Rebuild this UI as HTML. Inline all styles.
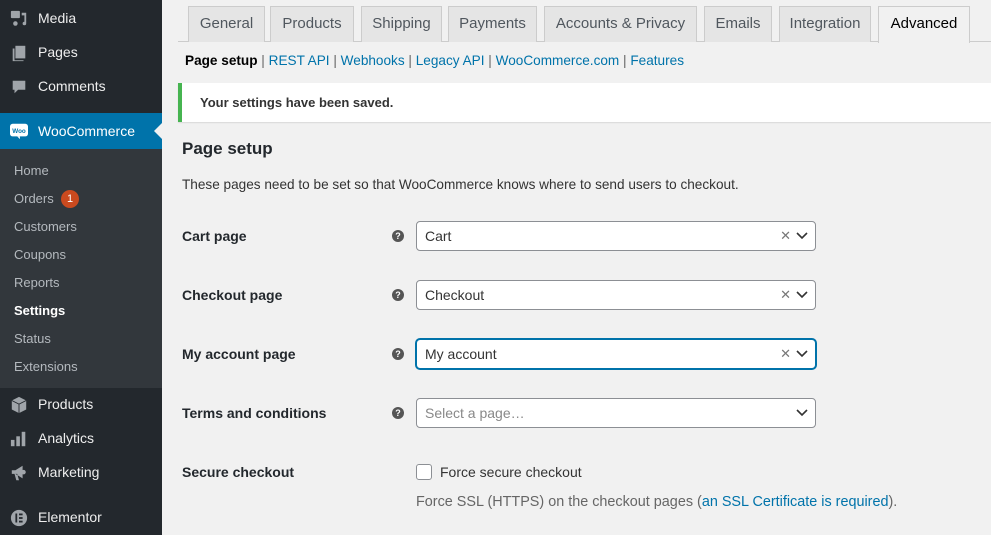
<!DOCTYPE html>
<html><head><meta charset="utf-8"><style>
*{box-sizing:border-box;margin:0;padding:0}
body{width:991px;height:535px;overflow:hidden;background:#f1f1f1;font-family:"Liberation Sans",sans-serif;font-size:14px;color:#23282d;position:relative}
#sb{position:absolute;left:0;top:0;width:162px;height:535px;background:#23282d}
.mi{position:absolute;left:0;width:162px;color:#eee;font-size:14px}
.mi .ic{position:absolute;left:10px;width:18px;height:18px}
.mi span.t{position:absolute;left:38px}
#woo{top:113px;height:36px;background:#0073aa;color:#fff}
#sub{position:absolute;top:149px;left:0;width:162px;height:239px;background:#32373c}
.si{position:absolute;left:14px;font-size:13px;color:#b4b9be}
.tab{position:absolute;top:6px;height:36px;background:#e5e5e5;border:1px solid #ccc;border-bottom:none;font-size:15px;color:#50575e;text-align:center;line-height:34px}
.sub a{color:#0073aa;text-decoration:none}
.lbl{position:absolute;left:182px;font-size:14px;font-weight:bold;color:#23282d}
.q{position:absolute;left:392px;width:12px;height:12px;border-radius:50%;background:#555;color:#fff;font-size:9px;font-weight:bold;text-align:center;line-height:12px}
.sel{position:absolute;left:416px;width:400px;height:30px;background:#fff;border:1px solid #8c8f94;border-radius:4px;font-size:14px;line-height:28px;padding-left:8px;color:#333}
.sel .x{position:absolute;right:24px;top:0;color:#777;font-size:13px}
.sel svg{position:absolute;right:7px;top:10px}
</style></head><body>
<div id="sb">
 <div class="mi" style="top:10px"><svg class="ic" viewBox="0 0 20 20" style="top:0"><rect x="1" y="1" width="10" height="8" rx="1" fill="#a0a5aa"/><path d="M13 3h5v12a2 2 0 1 1-2-2V6h-3z" fill="#a0a5aa"/><circle cx="6" cy="15" r="2.5" fill="#a0a5aa"/></svg><span class="t">Media</span></div>
 <div class="mi" style="top:44px"><svg class="ic" viewBox="0 0 20 20" style="top:0"><path d="M6 2h11v14H6z" fill="#a0a5aa"/><path d="M3 5h2v13h10v1H3z" fill="#a0a5aa"/></svg><span class="t">Pages</span></div>
 <div class="mi" style="top:78px"><svg class="ic" viewBox="0 0 20 20" style="top:0"><path d="M3 3h14v10H9l-4 4v-4H3z" fill="#a0a5aa"/></svg><span class="t">Comments</span></div>
 <div class="mi" id="woo"><svg class="ic" viewBox="0 0 20 20" style="top:9px"><rect x="0" y="2" width="20" height="14" rx="3" fill="#fff"/><path d="M8 16l3 3v-3z" fill="#fff"/><text x="10" y="12" font-size="7" font-weight="bold" fill="#0073aa" text-anchor="middle" font-family="Liberation Sans">Woo</text></svg><span class="t" style="top:10px">WooCommerce</span>
 <div style="position:absolute;right:0;top:10px;width:0;height:0;border-top:8px solid transparent;border-bottom:8px solid transparent;border-right:8px solid #f1f1f1"></div></div>
 <div id="sub"></div>
 <div class="si" style="top:163px">Home</div>
 <div class="si" style="top:191px">Orders</div>
 <div style="position:absolute;left:61px;top:190px;width:18px;height:18px;border-radius:50%;background:#ca4a1f;color:#fff;font-size:11px;text-align:center;line-height:18px">1</div>
 <div class="si" style="top:219px">Customers</div>
 <div class="si" style="top:247px">Coupons</div>
 <div class="si" style="top:275px">Reports</div>
 <div class="si" style="top:303px;color:#fff;font-weight:bold">Settings</div>
 <div class="si" style="top:331px">Status</div>
 <div class="si" style="top:359px">Extensions</div>
 <div class="mi" style="top:396px"><svg class="ic" viewBox="0 0 20 20" style="top:0"><path d="M10 1l8 4v10l-8 4-8-4V5z" fill="#a0a5aa"/><path d="M2 5l8 4 8-4M10 9v10" stroke="#23282d" fill="none"/></svg><span class="t">Products</span></div>
 <div class="mi" style="top:430px"><svg class="ic" viewBox="0 0 20 20" style="top:0"><rect x="1" y="11" width="4" height="7" fill="#a0a5aa"/><rect x="7" y="7" width="4" height="11" fill="#a0a5aa"/><rect x="13" y="2" width="4" height="16" fill="#a0a5aa"/></svg><span class="t">Analytics</span></div>
 <div class="mi" style="top:464px"><svg class="ic" viewBox="0 0 20 20" style="top:0"><path d="M2 7h4l8-5v14l-8-5H2z M5 11l2 7h3l-2-7z" fill="#a0a5aa"/><circle cx="15" cy="9" r="2.5" fill="#a0a5aa"/></svg><span class="t">Marketing</span></div>
 <div class="mi" style="top:509px"><svg class="ic" viewBox="0 0 20 20" style="top:0"><circle cx="10" cy="10" r="9" fill="#a0a5aa"/><rect x="6" y="5" width="2" height="10" fill="#23282d"/><rect x="10" y="5" width="4" height="2" fill="#23282d"/><rect x="10" y="9" width="4" height="2" fill="#23282d"/><rect x="10" y="13" width="4" height="2" fill="#23282d"/></svg><span class="t">Elementor</span></div>
</div>

<div style="position:absolute;left:178px;top:41px;width:813px;border-top:1px solid #ccc"></div>
<div class="tab" style="left:188px;width:77px">General</div>
<div class="tab" style="left:270px;width:84px">Products</div>
<div class="tab" style="left:361px;width:81px">Shipping</div>
<div class="tab" style="left:448px;width:89px">Payments</div>
<div class="tab" style="left:544px;width:153px">Accounts &amp; Privacy</div>
<div class="tab" style="left:704px;width:68px">Emails</div>
<div class="tab" style="left:779px;width:92px">Integration</div>
<div class="tab" style="left:878px;width:92px;background:#f1f1f1;color:#000;height:37px">Advanced</div>

<div class="sub" style="position:absolute;left:185px;top:53px;font-size:13.6px;color:#666">
<b style="color:#000">Page setup</b> | <a>REST API</a> | <a>Webhooks</a> | <a>Legacy API</a> | <a>WooCommerce.com</a> | <a>Features</a></div>

<div style="position:absolute;left:178px;top:83px;width:813px;height:39px;background:#fff;border-left:4px solid #46b450;box-shadow:0 1px 1px rgba(0,0,0,.1);font-size:13px;font-weight:bold;line-height:39px;padding-left:18px;color:#333">Your settings have been saved.</div>

<div style="position:absolute;left:182px;top:139px;font-size:17px;font-weight:bold;color:#23282d">Page setup</div>
<div style="position:absolute;left:182px;top:177px;font-size:13.6px;color:#333">These pages need to be set so that WooCommerce knows where to send users to checkout.</div>

<div class="lbl" style="top:228px">Cart page</div><div class="q" style="top:230px">?</div>
<div class="sel" style="top:221px">Cart<span class="x">✕</span><svg width="12" height="8" viewBox="0 0 12 8"><path d="M1 1l5 5 5-5" stroke="#333" stroke-width="1.6" fill="none"/></svg></div>
<div class="lbl" style="top:287px">Checkout page</div><div class="q" style="top:289px">?</div>
<div class="sel" style="top:280px">Checkout<span class="x">✕</span><svg width="12" height="8" viewBox="0 0 12 8"><path d="M1 1l5 5 5-5" stroke="#333" stroke-width="1.6" fill="none"/></svg></div>
<div class="lbl" style="top:346px">My account page</div><div class="q" style="top:348px">?</div>
<div class="sel" style="top:339px;border-color:#0073aa;box-shadow:0 0 0 1px #0073aa">My account<span class="x">✕</span><svg width="12" height="8" viewBox="0 0 12 8"><path d="M1 1l5 5 5-5" stroke="#333" stroke-width="1.6" fill="none"/></svg></div>
<div class="lbl" style="top:405px">Terms and conditions</div><div class="q" style="top:407px">?</div>
<div class="sel" style="top:398px;color:#888">Select a page…<svg width="12" height="8" viewBox="0 0 12 8"><path d="M1 1l5 5 5-5" stroke="#333" stroke-width="1.6" fill="none"/></svg></div>
<div class="lbl" style="top:464px">Secure checkout</div>
<div style="position:absolute;left:416px;top:464px;width:16px;height:16px;border:1px solid #8c8f94;border-radius:3px;background:#fff"></div>
<div style="position:absolute;left:440px;top:464px;font-size:14px;color:#333">Force secure checkout</div>
<div style="position:absolute;left:416px;top:494px;font-size:14.4px;color:#666">Force SSL (HTTPS) on the checkout pages (<span style="color:#0073aa">an SSL Certificate is required</span>).</div>
</body></html>
